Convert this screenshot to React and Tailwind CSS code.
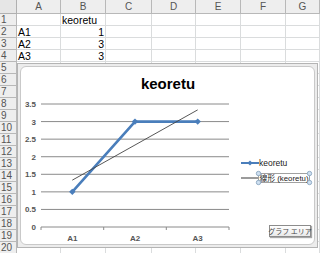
import React from "react";

const cols = ["A", "B", "C", "D", "E", "F", "G"];
const colW = [44, 45, 46, 44, 45, 45, 34];
const rows = Array.from({ length: 20 }, (_, i) => i + 1);

const cellData = {
  "1-1": { t: "keoretu", a: "left" },
  "2-0": { t: "A1", a: "left" },
  "2-1": { t: "1", a: "right" },
  "3-0": { t: "A2", a: "left" },
  "3-1": { t: "3", a: "right" },
  "4-0": { t: "A3", a: "left" },
  "4-1": { t: "3", a: "right" },
};

const y0 = 226;
const unit = 35.14;
const vy = (v) => y0 - v * unit;
const ticks = [0, 0.5, 1, 1.5, 2, 2.5, 3, 3.5];
const cx = [71.3, 134, 196.7];

function Diamond({ x, y, s = 3.2, fill = "#4a7ebb" }) {
  return (
    <polygon
      points={`${x},${y - s} ${x + s},${y} ${x},${y + s} ${x - s},${y}`}
      fill={fill}
    />
  );
}

function Handle({ x, y }) {
  return <circle cx={x} cy={y} r="2.2" fill="#cfe0f1" stroke="#7f9db9" strokeWidth="0.8" />;
}

function Chart() {
  return (
    <div className="absolute left-[17px] top-[63px] w-[301px] h-[185px] border border-[#b4b4b4] bg-[#ececec] p-[2px]">
      <div className="relative w-full h-full bg-white rounded-[6px] border border-[#c9c9c9] overflow-hidden">
        <svg
          className="absolute left-0 top-0"
          width="295"
          height="179"
          viewBox="20 66 295 179"
        >
          <text
            x="167"
            y="88"
            textAnchor="middle"
            fontFamily="'Liberation Sans', Arial, sans-serif"
            fontWeight="bold"
            fontSize="15"
            fill="#000"
          >
            keoretu
          </text>
          {ticks.map((v) => (
            <g key={v}>
              <line x1="40" x2="228" y1={vy(v)} y2={vy(v)} stroke="#8a8a8a" strokeWidth="1" />
              <text
                x="35"
                y={vy(v) + 3}
                textAnchor="end"
                fontFamily="'Liberation Sans', Arial, sans-serif"
                fontSize="8"
                fontWeight="bold"
                fill="#555"
              >
                {v === 0 ? "0" : v % 1 === 0 ? v : v.toFixed(1)}
              </text>
            </g>
          ))}
          {[40, 102.7, 165.3, 228].map((x) => (
            <line key={x} x1={x} x2={x} y1={y0} y2={y0 + 3} stroke="#8a8a8a" strokeWidth="1" />
          ))}
          {["A1", "A2", "A3"].map((t, i) => (
            <text
              key={t}
              x={cx[i]}
              y="240"
              textAnchor="middle"
              fontFamily="'Liberation Sans', Arial, sans-serif"
              fontSize="8"
              fontWeight="bold"
              fill="#555"
            >
              {t}
            </text>
          ))}
          <polyline
            points={`${cx[0]},${vy(1)} ${cx[1]},${vy(3)} ${cx[2]},${vy(3)}`}
            fill="none"
            stroke="#4a7ebb"
            strokeWidth="2.6"
            strokeLinejoin="round"
          />
          <Diamond x={cx[0]} y={vy(1)} />
          <Diamond x={cx[1]} y={vy(3)} />
          <Diamond x={cx[2]} y={vy(3)} />
          <line
            x1={cx[0]}
            y1={vy(4 / 3)}
            x2={cx[2]}
            y2={vy(10 / 3)}
            stroke="#444"
            strokeWidth="0.9"
          />
          {/* legend */}
          <line x1="240" x2="258" y1="162" y2="162" stroke="#4a7ebb" strokeWidth="2.2" />
          <Diamond x={249} y={162} s={2.6} />
          <text
            x="258"
            y="165"
            fontFamily="'Liberation Sans', Arial, sans-serif"
            fontSize="8.5"
            fill="#222"
          >
            keoretu
          </text>
          <line x1="240" x2="257" y1="177" y2="177" stroke="#7a7a7a" strokeWidth="1.3" />
          <rect x="257.5" y="172.5" width="51" height="9" fill="none" stroke="#8a8a8a" strokeWidth="0.8" />
          <text
            x="258.5"
            y="180"
            fontFamily="'Liberation Sans', 'Noto Sans CJK JP', sans-serif"
            fontSize="8"
            textLength="49"
            lengthAdjust="spacingAndGlyphs"
            fill="#222"
          >
            線形 (keoretu)
          </text>
          <Handle x={257.5} y={172.5} />
          <Handle x={308.5} y={172.5} />
          <Handle x={257.5} y={181.5} />
          <Handle x={308.5} y={181.5} />
        </svg>
        <div className="absolute left-[248px] top-[158px] w-[42px] h-[12px] whitespace-nowrap border border-[#8c8c8c] bg-gradient-to-b from-white to-[#e9e9e9] shadow-[1px_1px_1px_rgba(0,0,0,0.35)] flex items-center justify-center text-[7px] leading-none text-[#444] font-['Noto_Sans_CJK_JP',sans-serif]">
          グラフ エリア
        </div>
      </div>
    </div>
  );
}

export default function App() {
  return (
    <div className="relative w-[320px] h-[253px] overflow-hidden bg-white font-['Liberation_Sans','Noto_Sans_CJK_JP',sans-serif] text-black">
      <div className="flex h-[14px]">
        <div className="w-[17px] shrink-0 bg-[#e6e6e6] border-r border-b border-[#b0b0b0]" />
        {cols.map((c, i) => (
          <div
            key={c}
            style={{ width: colW[i] }}
            className="shrink-0 bg-[#eeeeee] border-r border-b border-[#b8b8b8] flex items-center justify-center text-[10px] text-[#555] leading-none"
          >
            {c}
          </div>
        ))}
      </div>
      {rows.map((r) => (
        <div key={r} className="flex h-[12px]">
          <div className="w-[17px] shrink-0 bg-[#eeeeee] border-r border-b border-[#b8b8b8] flex items-center pl-[1px] text-[10px] text-[#555] leading-[10px]">
            {r}
          </div>
          {cols.map((c, i) => {
            const d = cellData[`${r}-${i}`];
            return (
              <div
                key={c}
                style={{ width: colW[i] }}
                className={`shrink-0 border-r border-b border-[#dadcdd] flex items-center px-[1px] leading-[10px] text-[10.5px] ${
                  d && d.a === "right" ? "justify-end" : "justify-start"
                }`}
              >
                {d ? d.t : ""}
              </div>
            );
          })}
        </div>
      ))}
      <Chart />
    </div>
  );
}
